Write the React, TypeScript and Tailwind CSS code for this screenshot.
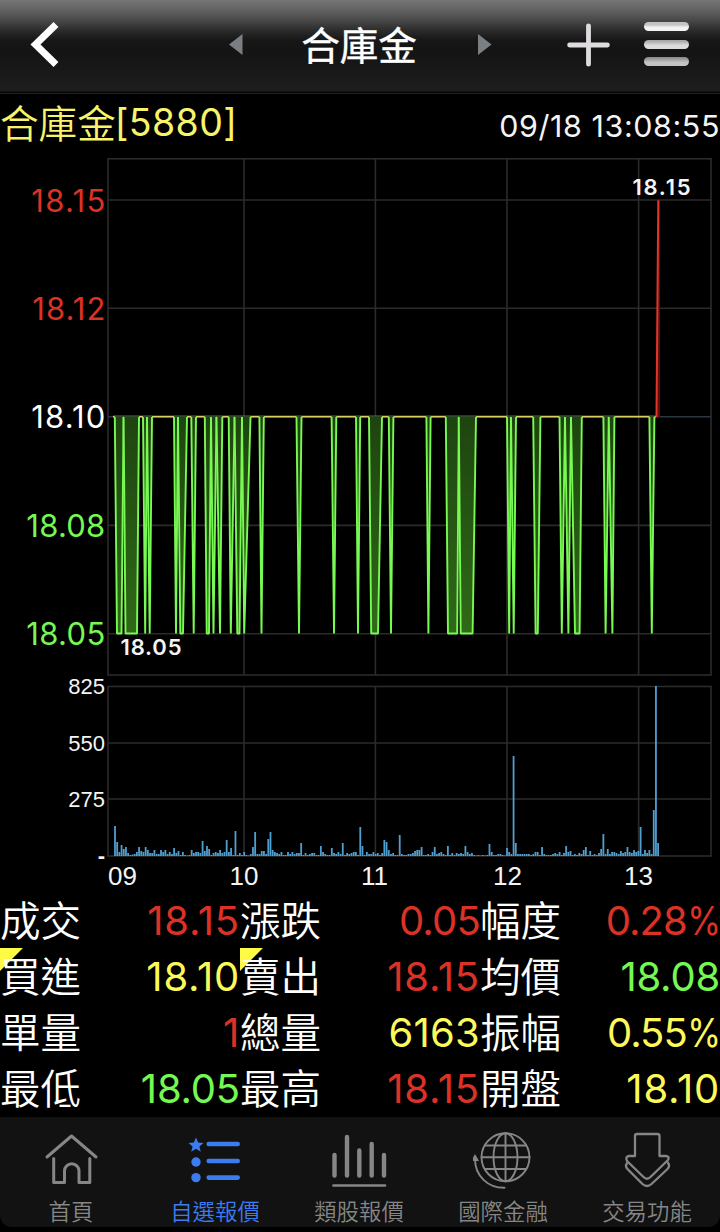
import React from 'react';

type Tone = 'red' | 'yellow' | 'green';

const tones: Record<Tone, string> = {
    red: 'text-[#dc3226]',
    yellow: 'text-[#fdf95a]',
    green: 'text-[#75f852]',
};

const quotes: { label: string; value: string; unit?: string; tone: Tone; spacing: string; flag?: boolean }[] = [
    { label: '成交', value: '18.15', tone: 'red', spacing: 'tracking-[0.8px]' },
    { label: '漲跌', value: '0.05', tone: 'red', spacing: 'tracking-[-0.8px]' },
    { label: '幅度', value: '0.28', unit: '%', tone: 'red', spacing: 'tracking-[-1px]' },
    { label: '買進', value: '18.10', tone: 'yellow', spacing: 'tracking-[0.8px]', flag: true },
    { label: '賣出', value: '18.15', tone: 'red', spacing: 'tracking-[0.8px]', flag: true },
    { label: '均價', value: '18.08', tone: 'green', spacing: 'tracking-[-0.2px]' },
    { label: '單量', value: '1', tone: 'red', spacing: 'tracking-[0.8px]' },
    { label: '總量', value: '6163', tone: 'yellow', spacing: 'tracking-[0.2px]' },
    { label: '振幅', value: '0.55', unit: '%', tone: 'yellow', spacing: 'tracking-[-1px]' },
    { label: '最低', value: '18.05', tone: 'green', spacing: 'tracking-[-0.2px]' },
    { label: '最高', value: '18.15', tone: 'red', spacing: 'tracking-[0.8px]' },
    { label: '開盤', value: '18.10', tone: 'yellow', spacing: 'tracking-[0.8px]' },
];

// Every dip from 18.10 to 18.05: start, bottom left, bottom right, end
const dips = [
    [114.8, 117, 121.5, 123.6], [123.6, 125.5, 137, 139], [143, 145.2, 145.2, 147], [147, 149.7, 149.7, 152],
    [174, 176, 176, 178], [178, 180.3, 183, 187], [191.3, 193.7, 193.7, 196], [204.8, 206.7, 209, 211],
    [211, 213.5, 213.5, 216.5], [216.5, 220, 220, 222.3], [228.7, 230.8, 230.8, 234.6], [234.6, 237.3, 239.5, 242],
    [242, 244.2, 244.2, 250.5], [259.4, 261.5, 261.5, 263.8], [296.5, 299, 299, 301.5], [331.6, 334, 334, 336.3],
    [356, 358, 358, 360.2], [369, 371.2, 378, 382], [388.8, 391, 391, 393.4], [426.4, 428.4, 428.4, 430.6],
    [445.8, 448, 457.2, 458.8], [458.8, 460.7, 472.6, 476], [507, 509.2, 509.2, 511], [511, 513.7, 513.7, 516],
    [533.2, 535.6, 537.8, 540.4], [559.5, 561.8, 561.8, 565], [565, 568.4, 568.4, 571], [571, 575, 579.6, 581.8],
    [603.4, 605.6, 605.6, 608.8], [608.8, 612.4, 612.4, 614.4], [649.4, 651.8, 651.8, 654.4],
];

// Bar height per minute, from 09:01 to 13:09
const volumes = [
    30, 14, 4, 11, 7, 9, 3, 1, 1.5, 2, 4, 9, 5, 4, 9, 6, 3, 3, 6, 2, 2, 6, 4, 6, 2, 4, 2, 8, 3, 5,
    1, 4, 1, 0.5, 1, 6, 3, 4, 4, 3, 15, 5, 10, 7, 1, 3, 4, 3, 6, 3, 4, 16, 4, 8, 1, 25, 1, 3, 1, 4,
    1, 0.5, 2, 9, 24, 2, 2, 5, 5, 2, 17, 24, 6, 4, 3, 2, 4, 1, 1, 4, 2, 4, 2, 3, 3, 13, 1, 3, 1, 2,
    3, 3, 1, 1, 10, 4, 2, 1, 1, 8, 3, 2, 4, 2, 13, 1, 3, 2, 3, 4, 4, 1, 29, 10, 1, 4, 2, 2, 4, 2,
    3, 1, 3, 16, 14, 6, 2, 3, 1, 1, 21, 2, 1, 1, 2, 2, 3, 5, 6, 6, 9, 1, 1, 2, 1, 4, 9, 2, 3, 4,
    2, 1, 10, 1, 3, 1, 3, 2, 3, 2, 10, 4, 2, 3, 1, 0.5, 1, 0.5, 1, 0.5, 1, 12, 4, 1, 1, 2, 2, 1, 0.5, 8,
    4, 2, 100, 13, 2, 2, 2, 2, 2, 2, 1, 2, 4, 4, 1, 9, 2, 1, 1, 1, 2, 3, 2, 4, 1, 3, 10, 4, 5, 1,
    2, 1, 3, 2, 6, 9, 1, 5, 1, 2, 1, 3, 7, 22, 2, 7, 2, 4, 4, 3, 2, 5, 3, 4, 9, 4, 3, 6, 4, 5,
    29, 2, 6, 3, 6, 2, 46, 170, 13,
];

const dipPoints = ([a, b, c, d]: number[]) => `${a},417 ${b},633.5 ${c},633.5 ${d},417`;

const Header = () => (
    <header className="flex h-[94px] shrink-0 items-start border-b border-[#222222] bg-[linear-gradient(to_bottom,#757575_0px,#626262_10px,#464646_21px,#2a2a2a_31px,#171717_40px,#141414_50px,#171717_66px,#1e1e1e_91px,#050505_92px,#050505_93px)]">
        <svg className="mt-[21px] ml-[30px] h-[48px] w-[30px] shrink-0" viewBox="0 0 30 48" fill="none">
            <path d="M26 3.5 L5.5 23.5 L26 43.5" stroke="#fff" strokeWidth="7" />
        </svg>
        <svg className="mt-[34px] ml-[168.5px] h-[22px] w-[14px] shrink-0" viewBox="0 0 14 22">
            <path d="M13.5 0 V21 L0 10.5 Z" fill="#7b7f83" />
        </svg>
        <h1 className="mt-[14px] ml-[58px] w-[117px] shrink-0 text-center text-[38.6px] leading-[58px] font-normal whitespace-nowrap text-white [-webkit-text-stroke:0.4px_white]">合庫金</h1>
        <svg className="mt-[34px] ml-[60.5px] h-[22px] w-[14px] shrink-0" viewBox="0 0 14 22">
            <path d="M0 0 V21 L13.5 10.5 Z" fill="#7b7f83" />
        </svg>
        <svg className="mt-[23px] ml-[75px] h-[44px] w-[43px] shrink-0" viewBox="0 0 43 44" fill="none" stroke="#dedcde" strokeWidth="4.8" strokeLinecap="round">
            <path d="M21.5 2.8 V41.2 M2.6 22 H40.4" />
        </svg>
        <div className="mt-[22px] ml-[34px] flex w-[45px] shrink-0 flex-col gap-[8.5px]">
            <div className="h-[9px] rounded-full bg-gradient-to-b from-[#c4c4c4] from-30% to-[#f4f4f4] to-60%" />
            <div className="h-[9px] rounded-full bg-gradient-to-b from-[#a8a8a8] from-10% to-[#dcdcdc] to-60%" />
            <div className="h-[9px] rounded-full bg-gradient-to-b from-[#8d8d8d] from-10% to-[#c4c4c4] to-60%" />
        </div>
    </header>
);

const PriceChart = () => (
    <svg className="block h-[742px] w-[720px] shrink-0" viewBox="0 150 720 742">
        <defs>
            <linearGradient id="dip" gradientUnits="userSpaceOnUse" x1="0" y1="417" x2="0" y2="634">
                <stop offset="0" stopColor="#1e440f" />
                <stop offset="1" stopColor="#2f6a18" />
            </linearGradient>
        </defs>

        {/* Grid */}
        <g fill="none" stroke="#2b2b2b" strokeWidth="1.6">
            <rect x="108" y="158.8" width="603" height="516.2" />
            <rect x="108" y="686.5" width="603" height="169.5" />
            {[200, 308.3, 525.4, 633.8, 743, 799].map((y) => (
                <path key={y} d={`M108 ${y} H711`} />
            ))}
            {[244, 375.4, 507, 638.6].map((x) => (
                <path key={x} d={`M${x} 159 V675 M${x} 687 V856`} />
            ))}
        </g>
        <path d="M108 416.8 H711" stroke="#2a3742" strokeWidth="1.4" />

        {/* Price */}
        <path d="M113 416.6 H656" stroke="#d8cf63" strokeWidth="1.6" />
        {dips.map((dip) => (
            <g key={dip[0]}>
                <path d={`M${dip[0]} 416.6 H${dip[3]}`} stroke="#2e4b2c" strokeWidth="1.6" />
                <polyline points={dipPoints(dip)} fill="url(#dip)" stroke="#79f953" strokeWidth="1.9" strokeLinejoin="bevel" />
            </g>
        ))}
        <path d="M656.5 417 L658.4 200 H660 V417 Z" fill="#5c0c0a" />
        <path d="M656.5 417 L658.3 200.3" stroke="#e0362a" strokeWidth="2" />

        {/* Volume */}
        <g fill="#4f9fd0">
            {volumes.map((height, i) => (
                <rect key={i} x={114.1 + i * 2.19} y={856 - height} width="1.8" height={height} />
            ))}
        </g>

        {/* Scales */}
        <g className="font-['Inter']" fontSize="31" textAnchor="end">
            <text x="105.3" y="211.5" fill="#dc3226" textLength="74">18.15</text>
            <text x="105.3" y="319.5" fill="#dc3226" textLength="73">18.12</text>
            <text x="105.3" y="428" fill="#fff" textLength="74">18.10</text>
            <text x="105.3" y="536.6" fill="#75f852" textLength="79">18.08</text>
            <text x="105.3" y="645" fill="#75f852" textLength="79">18.05</text>
        </g>
        <g className="font-['Inter']" fontSize="22" fontWeight="600" fill="#f4f4f4">
            <text x="632.5" y="194.6" textLength="58">18.15</text>
            <text x="120.5" y="654.8" textLength="61">18.05</text>
        </g>
        <g className="font-['Liberation_Sans']" fontSize="22" fill="#f4f4f4" textAnchor="end">
            <text x="105" y="694">825</text>
            <text x="105" y="751">550</text>
            <text x="105" y="807">275</text>
            <text x="105" y="863" fontWeight="700">-</text>
        </g>
        <g className="font-['Liberation_Sans']" fontSize="26" fill="#f4f4f4">
            <text x="108" y="885">09</text>
            <text x="229.5" y="885">10</text>
            <text x="361" y="885">11</text>
            <text x="493" y="885">12</text>
            <text x="624" y="885">13</text>
        </g>
    </svg>
);

const QuoteGrid = () => (
    <section className="grid shrink-0 grid-cols-3">
        {quotes.map((quote) => (
            <div key={quote.label} className="relative flex h-[56px] items-center justify-between">
                {quote.flag && (
                    <div className="absolute top-0 left-0 h-[23px] w-[23px] bg-[#fffb45] [clip-path:polygon(0_0,100%_0,0_100%)]" />
                )}
                <span className="relative pb-[3px] text-[40.6px] leading-[53px] font-[350] text-white">{quote.label}</span>
                <span className={`-mr-px flex pt-px pr-px font-['Inter'] text-[40px] leading-[56px] ${quote.spacing} ${tones[quote.tone]}`}>
                    {quote.value}
                    {quote.unit && <span className="-ml-[5px] origin-right scale-x-[0.86]">{quote.unit}</span>}
                </span>
            </div>
        ))}
    </section>
);

const HomeIcon = () => (
    <svg className="h-[60px] w-[60px]" viewBox="41 1130 60 60" fill="none" stroke="currentColor" strokeWidth="3" strokeLinecap="round" strokeLinejoin="round">
        <path d="M47 1157 L71.5 1136 L96 1157" />
        <path d="M53.7 1158.5 V1182.5 H64.5 V1171 A7 7 0 0 1 79 1171 V1182.5 H89.8 V1158.5" />
    </svg>
);

const WatchIcon = () => (
    <svg className="h-[60px] w-[60px]" viewBox="185 1130 60 60" fill="currentColor">
        <path d="M196 1137.5 L198.1 1142.6 L203.5 1142.9 L199.4 1146.4 L200.8 1151.8 L196 1148.8 L191.2 1151.8 L192.6 1146.4 L188.5 1142.9 L193.9 1142.6 Z" />
        <circle cx="196" cy="1162" r="4.7" />
        <circle cx="196" cy="1177.6" r="4.7" />
        <path d="M208.7 1144 H237.7 M208.7 1161 H237.7 M208.7 1177.6 H237.7" stroke="currentColor" strokeWidth="4.6" strokeLinecap="round" />
    </svg>
);

const BarsIcon = () => (
    <svg className="h-[60px] w-[60px]" viewBox="329 1130 60 60" fill="none" stroke="currentColor" strokeWidth="4.4" strokeLinecap="round">
        <path d="M334.5 1155 V1175.5 M347 1137 V1175.5 M359.3 1150.5 V1175.5 M371.7 1144 V1175.5 M384 1155 V1175.5" />
        <path d="M333.5 1185.5 H385" strokeWidth="2.6" />
    </svg>
);

const GlobeIcon = () => (
    <svg className="h-[60px] w-[60px]" viewBox="473 1130 60 60" fill="none" stroke="currentColor" strokeWidth="1.9" strokeLinecap="round">
        <circle cx="505.5" cy="1157.3" r="24" />
        <ellipse cx="505.5" cy="1157.3" rx="12" ry="24" />
        <path d="M505.5 1133.3 V1181.3 M481.5 1157.3 H529.5 M485 1145.5 H526 M485 1169 H526" />
        <path d="M475 1159 C475 1176 488 1188 504.5 1187.8" />
        <path d="M475 1156 L472.8 1160 H477.4 Z" fill="currentColor" />
    </svg>
);

const TradeIcon = () => (
    <svg className="h-[60px] w-[60px]" viewBox="617 1130 60 60" fill="none" stroke="currentColor" strokeWidth="2.3" strokeLinejoin="round">
        <path d="M635 1136 Q635 1134 637 1134 H657.5 Q659.5 1134 659.5 1136 V1156 H666 Q670 1156.5 668 1160 L650.5 1177 Q647 1180.5 643.5 1177 L627 1161 Q625 1156.5 629 1156 H635 Z" />
        <path d="M627.5 1162.5 Q624.5 1166 627.5 1169 L642.5 1184 Q647 1188 651.5 1184 L667.5 1169 Q670.5 1166 667.5 1162" />
    </svg>
);

const tabs = [
    { label: '首頁', icon: HomeIcon },
    { label: '自選報價', icon: WatchIcon, active: true },
    { label: '類股報價', icon: BarsIcon },
    { label: '國際金融', icon: GlobeIcon },
    { label: '交易功能', icon: TradeIcon },
];

const TabBar = () => (
    <nav className="mt-px flex h-[110px] shrink-0 rounded-b-[12px] bg-[#121212] pt-[13px]">
        {tabs.map(({ label, icon: Icon, active }) => (
            <div key={label} className={`flex flex-1 flex-col items-center pr-[2px] ${active ? 'text-[#3b7cf0]' : 'text-[#868686]'}`}>
                <Icon />
                <span className="mt-[5px] text-[22.4px] leading-[30px] font-[350] whitespace-nowrap">{label}</span>
            </div>
        ))}
    </nav>
);

export default function App() {
    return (
        <main className="flex h-[1232px] w-[720px] flex-col overflow-hidden bg-black font-['Noto_Sans_CJK_TC',sans-serif]">
            <Header />
            <div className="flex h-[56px] shrink-0 items-start justify-between text-[38.6px] leading-[54px]">
                <div className="flex font-[350] text-[#f7f36a]">
                    <span>合庫金</span>
                    <span className="mt-px -ml-px font-['Inter'] text-[37.5px] leading-[56px] font-normal tracking-[0.4px]">[5880]</span>
                </div>
                <time className="mt-[5px] font-['Inter'] text-[30.4px] tracking-[0.6px] text-[#f4f4f4]">09/18 13:08:55</time>
            </div>
            <PriceChart />
            <QuoteGrid />
            <TabBar />
        </main>
    );
}
